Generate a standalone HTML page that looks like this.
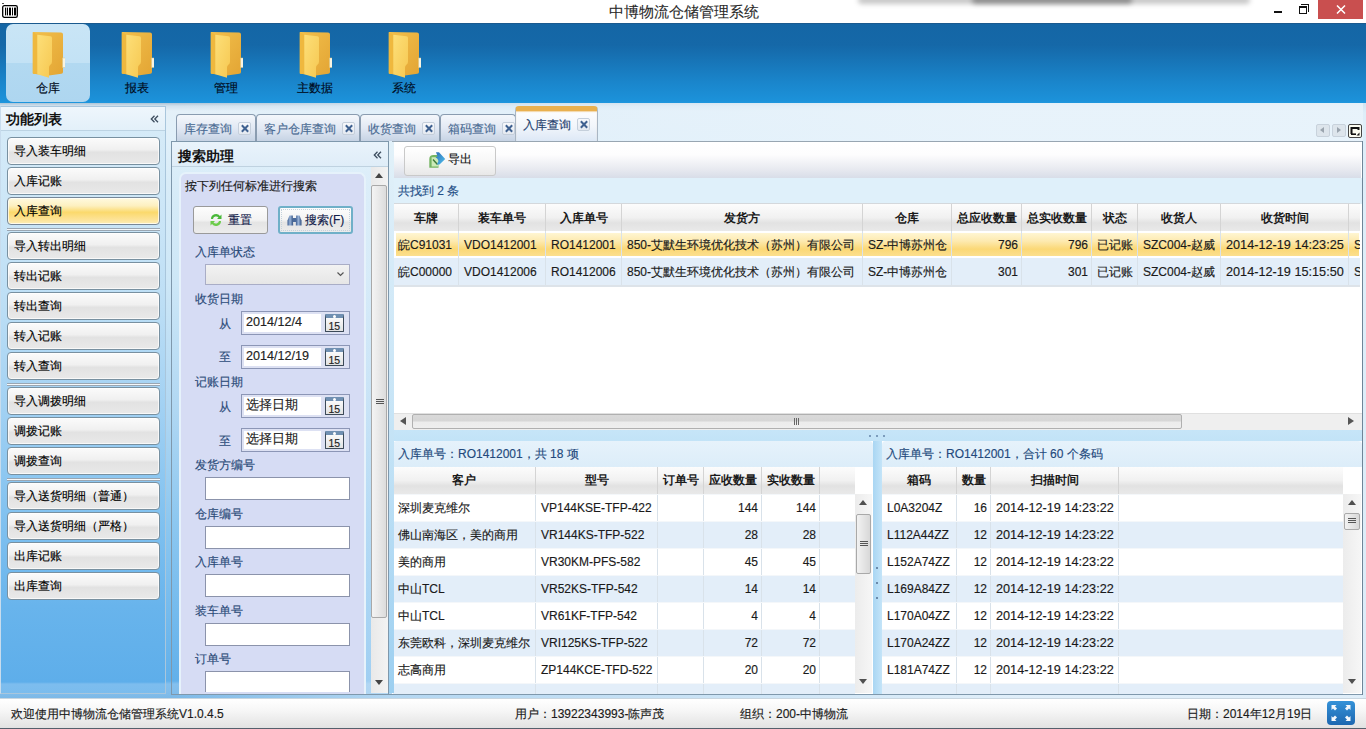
<!DOCTYPE html>
<html><head><meta charset="utf-8">
<style>
*{box-sizing:border-box;margin:0;padding:0}
html,body{width:1366px;height:729px;overflow:hidden;background:#fff;font-family:"Liberation Sans",sans-serif;font-size:12px;color:#1a1a1a;-webkit-text-stroke:0.15px currentColor}
.hc,.nb{-webkit-text-stroke:0}
.a{position:absolute}
.t{position:absolute;white-space:nowrap;line-height:1}
/* title */
#title{left:0;top:0;width:1366px;height:23px;background:#fff}
#ribbon{left:0;top:23px;width:1366px;height:80px;background:linear-gradient(#1a5a8f 0,#1a5a8f 1px,#1466a5 1px,#1568a8 22px,#1a86cc 60px,#1c92da 78px,#1e97de 80px)}
.rbsel{left:6px;top:24px;width:84px;height:78px;border-radius:7px;background:linear-gradient(#c9e5f6 0,#c3e2f5 50%,#b2d9f1 50%,#aed6f0 100%)}
.rlbl{font-size:12px;color:#000a20}
#below{left:0;top:103px;width:1366px;height:595px;background:linear-gradient(90deg,rgba(228,241,250,0) 0,rgba(228,241,250,0) 175px,rgba(224,239,250,.55) 390px,rgba(232,243,251,.92) 1000px),linear-gradient(#aec4d6 0,#d2e2ee 3px,#e4f0f8 8px,#e0f0fa 38px,#d8ecf8 80px,#cde7f7 180px,#b2d8f3 300px,#8cc7f0 420px,#6cb6ec 540px,#62b0ea 578px,#84c0ee 581px,#80bcea 591px,#7cb8e6 595px)}
/* left panel */
#lp{left:0;top:106px;width:166px;height:588px;border:1px solid #a9c6dc;border-left:1px solid #c8dced;background:linear-gradient(#d8ecf8 0,#cce6f7 100px,#bcdef5 200px,#a2d1f3 300px,#84c3f0 400px,#68b4ec 500px,#5eaeea 575px,#7dbdee 577px,#7abced 588px)}
#lph{left:0;top:0;width:164px;height:24px;border-bottom:1px solid #bcd3e3;background:linear-gradient(#eef6fc,#e3f0f9)}
.btn{position:absolute;left:6px;width:153px;height:28px;border:1px solid #7890a0;border-radius:4px;background:linear-gradient(#fbfbfb 0,#f0f0f0 45%,#e2e2e2 55%,#e9e9e9 100%);box-shadow:inset 0 0 0 1px rgba(255,255,255,.7)}
.btn span{position:absolute;left:6px;top:7px;font-size:12px;line-height:1;white-space:nowrap;color:#000}
.btn.sel{background:linear-gradient(#fffae0 0,#fdf0c0 30%,#fbd96c 55%,#fde49a 85%,#fdeeb8 100%);border-color:#788898}
.sep{position:absolute;left:6px;width:153px;height:3px;border-top:1px solid #9aa6b2;border-bottom:1px solid #9aa6b2;background:#f4f8fb}
/* tabs */
.tab{position:absolute;top:114px;height:27px;border:1px solid #8a9cb0;border-bottom:none;border-radius:4px 4px 0 0;background:linear-gradient(#f4f7fb 0,#e2e9f4 50%,#c6d3e4 100%)}
.tab span{position:absolute;top:8px;font-size:12px;line-height:1;color:#4a6b93;white-space:nowrap}
.tx{position:absolute;width:13px;height:13px;border:1px solid #c5cfdb;background:linear-gradient(#f6f8fb,#e4e9f0);border-radius:2px}
.tx:before,.tx:after{content:"";position:absolute;left:4.6px;top:1.3px;width:2px;height:9px;background:#3f6190;transform:rotate(45deg)}
.tx:after{transform:rotate(-45deg)}
/* search panel */
#sp{left:171px;top:141px;width:218px;height:554px;border:1px solid #7f98ac;background:transparent}
#sph{left:0;top:0;width:216px;height:25px;border-bottom:1px solid #bfd2e0;background:linear-gradient(#e9f3fb,#dfedf8)}
#card{left:7px;top:30px;width:187px;height:522px;border:2px solid #e6f2fb;border-bottom:none;border-radius:7px 7px 0 0;background:#d6dcf4}
.lbl{position:absolute;font-size:12px;line-height:1;color:#2a4a78;white-space:nowrap}
.tb{position:absolute;left:205px;width:145px;height:23px;border:1px solid #8b93ab;background:#fff}
.db{position:absolute;left:241px;width:109px;height:24px;border:1px solid #8c96b6;background:#dde1f3}
.db:before{content:"";position:absolute;left:2px;top:2px;width:77px;height:18px;background:#fff}
.db span{position:absolute;left:4px;top:4px;font-size:12.6px;line-height:1;white-space:nowrap;color:#222}
.cal{position:absolute;left:83px;top:2px;width:19px;height:18px;border:1px solid #3c4a58;border-radius:1px;border-top:4px solid #7090b2;background:linear-gradient(#fafafa,#e2e2e2)}
.cal:after{content:"";position:absolute;left:7px;top:-3.5px;width:3px;height:3px;border-radius:50%;background:#fff}
.cal:before{content:"15";position:absolute;left:2.5px;top:3px;font-size:10.5px;line-height:1;color:#222}
/* main */
#mp{left:392px;top:141px;width:971px;height:554px;border:1px solid #7f98ac;border-top-color:#98a6b2;border-left:none;background:#fff}
.hdr{position:absolute;height:28px;background:linear-gradient(#fcfcfc 0,#f1f1f1 50%,#e2e2e2 70%,#e9e9e9 100%)}
.hc{position:absolute;top:0;height:28px;border-right:1px solid #d4d4d4;font-weight:bold;font-size:12px;line-height:28px;text-align:center;white-space:nowrap;color:#1a1a1a}
.row{position:absolute;height:27px;overflow:hidden}
.c{position:absolute;top:0;height:27px;border-right:1px solid #d9e2ea;font-size:12px;line-height:29px;white-space:nowrap;overflow:hidden;padding:0 5px;color:#1a1a1a}
.r{text-align:right;padding-right:3px}
.rl .c{line-height:27px}
.ph{position:absolute;height:26px;background:linear-gradient(#e6f2fb,#dcedf9);border-radius:4px 4px 0 0}
.ph span{position:absolute;left:5px;top:7px;font-size:12px;line-height:1;color:#23497c;white-space:nowrap}
#status{left:0;top:698px;width:1366px;height:31px;background:linear-gradient(#ffffff 0,#f6f6f6 40%,#e2e2e2 96%,#8a949e 96%,#2e3a48 100%);border-top:1px solid #c9d6e0}
.st{position:absolute;top:9px;font-size:12px;line-height:1;white-space:nowrap;color:#1a1a1a}
.vs{position:absolute;background:#e9e9e9;border-left:1px solid #dadada}
.thumb{position:absolute;border:1px solid #a9a9a9;border-radius:2px;background:linear-gradient(90deg,#e8e8e8,#d6d6d6)}
.up{position:absolute;width:0;height:0;border-left:4.5px solid transparent;border-right:4.5px solid transparent;border-bottom:5.5px solid #505050}
.dn{position:absolute;width:0;height:0;border-left:4.5px solid transparent;border-right:4.5px solid transparent;border-top:5.5px solid #505050}
</style></head><body>

<!-- title bar -->
<div id="title" class="a">
  <svg class="a" style="left:2px;top:3px" width="17" height="15" viewBox="0 0 17 15"><rect x="0" y="0" width="2" height="1" fill="#555"/><rect x="0.7" y="2.7" width="14.6" height="11.6" rx="1.6" fill="none" stroke="#000" stroke-width="1.3"/><rect x="3" y="4.6" width="1.2" height="7.8" fill="#000"/><rect x="5" y="4.6" width="1" height="7.8" fill="#000"/><rect x="7" y="4.6" width="2" height="7.8" fill="#000"/><rect x="10" y="4.6" width="1" height="7.8" fill="#000"/><rect x="12" y="4.6" width="2" height="7.8" fill="#000"/></svg>
  <div class="t" style="left:609px;top:5px;font-size:14.5px;color:#2a2a2a;-webkit-text-stroke:0.1px #2a2a2a">中博物流仓储管理系统</div>
  <div class="a" style="left:858px;top:-4px;width:392px;height:8px;background:rgba(0,0,0,.22);border-radius:8px;filter:blur(2.5px)"></div>
  <div class="a" style="left:972px;top:-4px;width:160px;height:8px;background:rgba(0,0,0,.3);border-radius:8px;filter:blur(2.5px)"></div>
  <div class="a" style="left:1274px;top:11px;width:8px;height:2px;background:#111"></div>
  <div class="a" style="left:1299px;top:6px;width:8px;height:8px;border:1px solid #111;border-top-width:2px"></div>
  <div class="a" style="left:1301px;top:4px;width:8px;height:8px;border-top:1px solid #111;border-right:1px solid #111"></div>
  <div class="a" style="left:1318px;top:0;width:45px;height:19px;background:#c94f4f"></div>
  <svg class="a" style="left:1336px;top:5px" width="10" height="9" viewBox="0 0 10 9"><path d="M1 0.5L9 8.5M9 0.5L1 8.5" stroke="#fff" stroke-width="1.5"/></svg>
</div>

<!-- ribbon -->
<div id="ribbon" class="a"></div>
<div class="a rbsel"></div>
<svg width="0" height="0" style="position:absolute">
  <defs>
    <linearGradient id="fb" x1="0" y1="0" x2="1" y2="1"><stop offset="0" stop-color="#f2c04c"/><stop offset="1" stop-color="#e3a534"/></linearGradient>
    <linearGradient id="ff" x1="0" y1="0" x2="1" y2="1"><stop offset="0" stop-color="#fddf78"/><stop offset="1" stop-color="#f6c852"/></linearGradient>
    <symbol id="folder" viewBox="0 0 34 48">
      <path d="M2 1 L30 1.6 Q32 1.7 32 3.6 L32 41 Q32 42.6 30.4 42.8 L18 44.6 L2.4 42.8 Q1.8 42.7 1.8 42 L1.8 1.6 Z" fill="url(#fb)"/>
      <path d="M1.8 1.2 L6.5 3.8 L6.5 43.2 L1.8 42.6 Z" fill="#efb83e"/>
      <rect x="31.6" y="27" width="2.8" height="9.5" fill="#f8f4e2" stroke="#dcc888" stroke-width="0.5"/>
      <path d="M6.3 3.8 L19.5 5.2 Q21 5.4 21 7 L21 30.5 Q21 32.8 19.4 33.8 Q18 34.8 18 36.8 L18 46.8 L6.3 43.2 Z" fill="url(#ff)"/>
    </symbol>
  </defs>
</svg>
<svg class="a" style="left:31px;top:31px" width="34" height="48"><use href="#folder"/></svg>
<svg class="a" style="left:120px;top:31px" width="34" height="48"><use href="#folder"/></svg>
<svg class="a" style="left:209px;top:31px" width="34" height="48"><use href="#folder"/></svg>
<svg class="a" style="left:298px;top:31px" width="34" height="48"><use href="#folder"/></svg>
<svg class="a" style="left:387px;top:31px" width="34" height="48"><use href="#folder"/></svg>
<div class="t rlbl" style="left:36px;top:82px">仓库</div>
<div class="t rlbl" style="left:125px;top:82px">报表</div>
<div class="t rlbl" style="left:214px;top:82px">管理</div>
<div class="t rlbl" style="left:297px;top:82px">主数据</div>
<div class="t rlbl" style="left:392px;top:82px">系统</div>

<div id="below" class="a"></div>

<!-- left panel -->
<div id="lp" class="a">
  <div id="lph" class="a"></div>
  <div class="t" style="left:5px;top:6px;font-size:13.5px;font-weight:bold;color:#111;-webkit-text-stroke:0">功能列表</div>
  <svg class="a" style="left:149px;top:8px" width="9" height="8" viewBox="0 0 9 8"><path d="M4.5 0.8 L1.3 4 L4.5 7.2 M8 0.8 L4.8 4 L8 7.2" stroke="#3c4c5e" stroke-width="1.3" fill="none"/></svg>
  <div class="btn" style="top:30px"><span>导入装车明细</span></div>
  <div class="btn" style="top:60px"><span>入库记账</span></div>
  <div class="btn sel" style="top:90px"><span>入库查询</span></div>
  <div class="sep" style="top:121px"></div>
  <div class="btn" style="top:125px"><span>导入转出明细</span></div>
  <div class="btn" style="top:155px"><span>转出记账</span></div>
  <div class="btn" style="top:185px"><span>转出查询</span></div>
  <div class="btn" style="top:215px"><span>转入记账</span></div>
  <div class="btn" style="top:245px"><span>转入查询</span></div>
  <div class="sep" style="top:276px"></div>
  <div class="btn" style="top:280px"><span>导入调拨明细</span></div>
  <div class="btn" style="top:310px"><span>调拨记账</span></div>
  <div class="btn" style="top:340px"><span>调拨查询</span></div>
  <div class="sep" style="top:371px"></div>
  <div class="btn" style="top:375px"><span>导入送货明细（普通）</span></div>
  <div class="btn" style="top:405px"><span>导入送货明细（严格）</span></div>
  <div class="btn" style="top:435px"><span>出库记账</span></div>
  <div class="btn" style="top:465px"><span>出库查询</span></div>
</div>

<!-- tabs -->
<div class="tab" style="left:176px;width:80px"><span style="left:7px">库存查询</span><div class="tx" style="left:61px;top:7px"></div></div>
<div class="tab" style="left:256px;width:104px"><span style="left:7px">客户仓库查询</span><div class="tx" style="left:85px;top:7px"></div></div>
<div class="tab" style="left:360px;width:80px"><span style="left:7px">收货查询</span><div class="tx" style="left:61px;top:7px"></div></div>
<div class="tab" style="left:440px;width:76px"><span style="left:7px">箱码查询</span><div class="tx" style="left:61px;top:7px"></div></div>
<div class="tab" style="left:515px;top:106px;height:35px;width:83px;border-color:#a9b6c4;border-top:5px solid #e9b04f;box-shadow:inset 0 1px 1px rgba(233,176,79,.5);background:linear-gradient(#fdfdfe 0,#f2f6fb 50%,#dde8f6 100%)"><span style="left:7px;top:8px;color:#1e3e6e">入库查询</span><div class="tx" style="left:61px;top:7px"></div></div>

<!-- tab scroll buttons -->
<div class="a" style="left:1316px;top:124px;width:14px;height:13px;border:1px solid #c8d2dc;background:#dde5ec;border-radius:2px"></div>
<div class="a" style="left:1320px;top:127px;width:0;height:0;border-top:3.5px solid transparent;border-bottom:3.5px solid transparent;border-right:4px solid #9aa4ae"></div>
<div class="a" style="left:1332px;top:124px;width:14px;height:13px;border:1px solid #c8d2dc;background:#dde5ec;border-radius:2px"></div>
<div class="a" style="left:1337px;top:127px;width:0;height:0;border-top:3.5px solid transparent;border-bottom:3.5px solid transparent;border-left:4px solid #9aa4ae"></div>
<div class="a" style="left:1348px;top:124px;width:14px;height:14px;border:1px solid #444;background:#fbfbf0;border-radius:2px"></div>
<svg class="a" style="left:1349px;top:125px" width="12" height="12" viewBox="0 0 12 12"><path d="M2.5 9 L2.5 3 L9.5 3 L9.5 5" stroke="#111" stroke-width="2" fill="none"/><path d="M2 9.2 L7 9.2" stroke="#111" stroke-width="1.6"/><path d="M10.5 7.5 L10.5 10.5 L7.5 10.5 Z" fill="#111"/></svg>

<!-- search panel -->
<div id="sp" class="a">
  <div id="sph" class="a"></div>
  <div class="t" style="left:6px;top:8px;font-size:13.5px;font-weight:bold;color:#111;-webkit-text-stroke:0">搜索助理</div>
  <svg class="a" style="left:201px;top:9px" width="9" height="8" viewBox="0 0 9 8"><path d="M4.5 0.8 L1.3 4 L4.5 7.2 M8 0.8 L4.8 4 L8 7.2" stroke="#3c4c5e" stroke-width="1.3" fill="none"/></svg>
  <div id="card" class="a"></div>
  <!-- scrollbar -->
  <div class="a" style="left:199px;top:25px;width:17px;height:526px;background:linear-gradient(90deg,#e9e9e9,#f3f3f3)"></div>
  <div class="up" style="left:203px;top:31px;border-left-width:4.5px;border-right-width:4.5px;border-bottom-width:5.5px;border-bottom-color:#444"></div>
  <div class="thumb" style="left:199px;top:43px;width:16px;height:433px;background:linear-gradient(90deg,#f4f4f4,#dcdcdc)"></div>
  <div class="a" style="left:204px;top:257px;width:8px;height:1px;background:#555;box-shadow:0 2px 0 #555,0 4px 0 #555"></div>
  <div class="dn" style="left:203px;top:538px;border-left-width:4.5px;border-right-width:4.5px;border-top-width:5.5px;border-top-color:#444"></div>
</div>
<div class="t" style="left:185px;top:180px;font-size:12px;color:#1a1a1a">按下列任何标准进行搜索</div>
<div class="a" style="left:193px;top:206px;width:75px;height:28px;border:1px solid #9a9a9a;border-radius:3px;background:linear-gradient(#fdfdfd 0,#f3f3f3 50%,#e4e4e4 60%,#ececec 100%)"></div>
<svg class="a" style="left:209px;top:212px" width="14" height="16" viewBox="0 0 14 16"><path d="M2 7 A5 5 0 0 1 11 4 L12.5 2.5 L12.5 7 L8 7 L9.5 5.5 A3.2 3.2 0 0 0 4 7 Z" fill="#4ab83a"/><path d="M12 9 A5 5 0 0 1 3 12 L1.5 13.5 L1.5 9 L6 9 L4.5 10.5 A3.2 3.2 0 0 0 10 9 Z" fill="#6ccc4a"/></svg>
<div class="t" style="left:228px;top:214px;font-size:12px;color:#13214a">重置</div>
<div class="a" style="left:278px;top:206px;width:75px;height:28px;border:2px solid #6fb0c8;border-radius:3px;background:linear-gradient(#fdfdfd 0,#f3f3f3 50%,#e4e4e4 60%,#ececec 100%)"></div>
<div class="a" style="left:281px;top:209px;width:69px;height:22px;border:1px dotted #c4d2dc"></div>
<svg class="a" style="left:287px;top:214px" width="15" height="12" viewBox="0 0 15 12"><defs><linearGradient id="bn" x1="0" y1="0" x2="1" y2="0"><stop offset="0" stop-color="#3a5c90"/><stop offset=".45" stop-color="#9ab4d8"/><stop offset="1" stop-color="#2f4f80"/></linearGradient></defs><path d="M0.5 11.5 L0.5 6.5 L2.5 1.5 L5.8 1.5 L6.2 11.5 Z" fill="url(#bn)"/><path d="M8.8 11.5 L9.2 1.5 L12.5 1.5 L14.5 6.5 L14.5 11.5 Z" fill="url(#bn)"/><rect x="5.8" y="4" width="3.4" height="4" fill="#4a6a9a"/></svg>
<div class="t" style="left:305px;top:214px;font-size:12px;color:#13214a">搜索(F)</div>

<div class="lbl" style="left:195px;top:246px">入库单状态</div>
<div class="a" style="left:205px;top:264px;width:145px;height:21px;border:1px solid #a9adc6;background:linear-gradient(#f2f2f2,#e6e6e6)"></div>
<svg class="a" style="left:337px;top:272px" width="7" height="5" viewBox="0 0 7 5"><path d="M0.5 0.5L3.5 3.5L6.5 0.5" stroke="#555" fill="none" stroke-width="1.2"/></svg>
<div class="lbl" style="left:195px;top:293px">收货日期</div>
<div class="lbl" style="left:219px;top:318px">从</div>
<div class="db" style="top:311px"><span>2014/12/4</span><div class="cal"></div></div>
<div class="lbl" style="left:219px;top:351px">至</div>
<div class="db" style="top:345px"><span>2014/12/19</span><div class="cal"></div></div>
<div class="lbl" style="left:195px;top:376px">记账日期</div>
<div class="lbl" style="left:219px;top:401px">从</div>
<div class="db" style="top:394px"><span>选择日期</span><div class="cal"></div></div>
<div class="lbl" style="left:219px;top:435px">至</div>
<div class="db" style="top:428px"><span>选择日期</span><div class="cal"></div></div>
<div class="lbl" style="left:195px;top:459px">发货方编号</div>
<div class="tb" style="top:477px"></div>
<div class="lbl" style="left:195px;top:508px">仓库编号</div>
<div class="tb" style="top:526px"></div>
<div class="lbl" style="left:195px;top:556px">入库单号</div>
<div class="tb" style="top:574px"></div>
<div class="lbl" style="left:195px;top:605px">装车单号</div>
<div class="tb" style="top:623px"></div>
<div class="lbl" style="left:195px;top:653px">订单号</div>
<div class="tb" style="top:671px;height:21px;border-bottom:none"></div>

<!-- main -->
<div id="mp" class="a"></div>
<!-- toolbar -->
<div class="a" style="left:393px;top:142px;width:968px;height:36px;background:linear-gradient(#ffffff 0,#fdfdfe 35%,#e8eaf0 75%,#d8dde8 100%)"></div>
<div class="a" style="left:404px;top:146px;width:92px;height:30px;border:1px solid #c9c9c9;border-radius:3px;background:linear-gradient(#ffffff 0,#f7f7f7 50%,#e8e8e8 100%)"></div>
<svg class="a" style="left:429px;top:152px" width="17" height="16" viewBox="0 0 17 16"><defs><linearGradient id="ar" x1="0" y1="0" x2="1" y2="1"><stop offset="0" stop-color="#2f6fb8"/><stop offset="1" stop-color="#4fc0ec"/></linearGradient></defs><path d="M0.3 15.8 L0.3 7 Q0.3 3 4.5 3 L9.5 3 L9.5 15.8 Z" fill="#74b462"/><path d="M2.6 5.2 L9.5 5.2 L9.5 14.5 L2.6 14.5 Z" fill="#cdebb8"/><path d="M4 7.5 L8.5 12.5" stroke="#3f7c3c" stroke-width="1.4"/><path d="M7 0.3 L10 0.3 L16.2 7 L10.5 12.5 L7.8 12.5 L9.5 9 Q8.8 6.5 6.5 5.2 L8.6 4.5 Z" fill="url(#ar)"/></svg>
<div class="t" style="left:448px;top:153px;font-size:12px;color:#111">导出</div>
<!-- found band -->
<div class="a" style="left:393px;top:178px;width:969px;height:26px;background:#dff0fa"></div>
<div class="t" style="left:398px;top:185px;font-size:12px;color:#1f4f86">共找到 2 条</div>
<!-- grid header -->
<div class="hdr" style="left:393px;top:203px;width:967px;height:28px;border-top:1px solid #d4d8dc">
  <div class="hc" style="left:0;width:66px">车牌</div>
  <div class="hc" style="left:66px;width:87px">装车单号</div>
  <div class="hc" style="left:153px;width:76px">入库单号</div>
  <div class="hc" style="left:229px;width:241px">发货方</div>
  <div class="hc" style="left:470px;width:89px">仓库</div>
  <div class="hc" style="left:559px;width:70px">总应收数量</div>
  <div class="hc" style="left:629px;width:70px">总实收数量</div>
  <div class="hc" style="left:699px;width:46px">状态</div>
  <div class="hc" style="left:745px;width:83px">收货人</div>
  <div class="hc" style="left:828px;width:128px">收货时间</div>
  <div class="hc" style="left:956px;width:13px;border-right:none"></div>
</div>
<div class="row" style="left:393px;top:231px;width:967px;background:#fff">
  <div class="a" style="left:3px;top:2px;right:1px;bottom:2px;background:linear-gradient(#fff6d2 0,#fdeab0 35%,#fbd876 70%,#fcdf8e 100%)"></div>
  <div class="c" style="left:0;width:66px">皖C91031</div>
  <div class="c" style="left:66px;width:87px">VDO1412001</div>
  <div class="c" style="left:153px;width:76px">RO1412001</div>
  <div class="c" style="left:229px;width:241px">850-艾默生环境优化技术（苏州）有限公司</div>
  <div class="c" style="left:470px;width:89px">SZ-中博苏州仓</div>
  <div class="c r" style="left:559px;width:70px">796</div>
  <div class="c r" style="left:629px;width:70px">796</div>
  <div class="c" style="left:699px;width:46px">已记账</div>
  <div class="c" style="left:745px;width:83px">SZC004-赵威</div>
  <div class="c" style="left:828px;width:128px;font-size:12.7px">2014-12-19 14:23:25</div>
  <div class="c" style="left:956px;width:11px;border-right:none">S</div>
</div>
<div class="row" style="left:393px;top:258px;width:967px;height:29px;background:#e3eef9;border-bottom:2px solid #dde3e9">
  <div class="c" style="left:0;width:66px">皖C00000</div>
  <div class="c" style="left:66px;width:87px">VDO1412006</div>
  <div class="c" style="left:153px;width:76px">RO1412006</div>
  <div class="c" style="left:229px;width:241px">850-艾默生环境优化技术（苏州）有限公司</div>
  <div class="c" style="left:470px;width:89px">SZ-中博苏州仓</div>
  <div class="c r" style="left:559px;width:70px">301</div>
  <div class="c r" style="left:629px;width:70px">301</div>
  <div class="c" style="left:699px;width:46px">已记账</div>
  <div class="c" style="left:745px;width:83px">SZC004-赵威</div>
  <div class="c" style="left:828px;width:128px;font-size:12.7px">2014-12-19 15:15:50</div>
  <div class="c" style="left:956px;width:11px;border-right:none">S</div>
</div>
<!-- hscroll -->
<div class="a" style="left:393px;top:413px;width:969px;height:17px;background:#efefef;border-top:1px solid #e0e0e0"></div>
<div class="a" style="left:400px;top:417px;width:0;height:0;border-top:4.5px solid transparent;border-bottom:4.5px solid transparent;border-right:6px solid #555"></div>
<div class="a" style="left:412px;top:414px;width:770px;height:15px;border:1px solid #b0b0b0;border-radius:2px;background:linear-gradient(#d9d9d9 0,#d6d6d6 45%,#ececec 55%,#eeeeee 100%)"></div>
<div class="a" style="left:794px;top:418px;width:1px;height:7px;background:#666;box-shadow:2px 0 0 #666,4px 0 0 #666"></div>
<div class="a" style="left:1348px;top:417px;width:0;height:0;border-top:4.5px solid transparent;border-bottom:4.5px solid transparent;border-left:6px solid #555"></div>
<!-- splitter band -->
<div class="a" style="left:393px;top:430px;width:969px;height:11px;background:linear-gradient(#c6e5f8,#c2e3f7)"></div>
<div class="a" style="left:869px;top:435px;width:2px;height:2px;background:#7c9cbc;box-shadow:7px 0 0 #7c9cbc,14px 0 0 #7c9cbc"></div>
<div class="a" style="left:873px;top:441px;width:9px;height:253px;background:linear-gradient(90deg,#a9d6f3,#c4e4f8)"></div>
<div class="a" style="left:876px;top:567px;width:2px;height:2px;background:#6a8aaa;box-shadow:0 15px 0 #6a8aaa,0 30px 0 #6a8aaa"></div>

<!-- lower left -->
<div class="a" style="left:393px;top:441px;width:480px;height:253px;background:#fff"></div>
<div class="ph" style="left:393px;top:441px;width:480px"><span>入库单号：RO1412001，共 18 项</span></div>
<div class="hdr" style="left:393px;top:467px;width:462px;height:27px"><div class="hc" style="left:0px;width:143px;height:27px;line-height:27px">客户</div><div class="hc" style="left:143px;width:122px;height:27px;line-height:27px">型号</div><div class="hc" style="left:265px;width:46px;height:27px;line-height:27px">订单号</div><div class="hc" style="left:311px;width:58px;height:27px;line-height:27px">应收数量</div><div class="hc" style="left:369px;width:58px;height:27px;line-height:27px">实收数量</div><div class="hc" style="left:427px;width:35px;height:27px;line-height:27px;border-right:none"></div></div>
<div class="row rl" style="left:393px;top:494px;width:462px;height:27px;background:#ffffff;border-top:1px solid #f4f7fa"><div class="c" style="left:0px;width:143px">深圳麦克维尔</div><div class="c" style="left:143px;width:122px">VP144KSE-TFP-422</div><div class="c" style="left:265px;width:46px"></div><div class="c r" style="left:311px;width:58px">144</div><div class="c r" style="left:369px;width:58px">144</div><div class="c" style="left:427px;width:35px;border-right:none"></div></div>
<div class="row rl" style="left:393px;top:521px;width:462px;height:27px;background:#e3eef9;border-top:1px solid #f4f7fa"><div class="c" style="left:0px;width:143px">佛山南海区，美的商用</div><div class="c" style="left:143px;width:122px">VR144KS-TFP-522</div><div class="c" style="left:265px;width:46px"></div><div class="c r" style="left:311px;width:58px">28</div><div class="c r" style="left:369px;width:58px">28</div><div class="c" style="left:427px;width:35px;border-right:none"></div></div>
<div class="row rl" style="left:393px;top:548px;width:462px;height:27px;background:#ffffff;border-top:1px solid #f4f7fa"><div class="c" style="left:0px;width:143px">美的商用</div><div class="c" style="left:143px;width:122px">VR30KM-PFS-582</div><div class="c" style="left:265px;width:46px"></div><div class="c r" style="left:311px;width:58px">45</div><div class="c r" style="left:369px;width:58px">45</div><div class="c" style="left:427px;width:35px;border-right:none"></div></div>
<div class="row rl" style="left:393px;top:575px;width:462px;height:27px;background:#e3eef9;border-top:1px solid #f4f7fa"><div class="c" style="left:0px;width:143px">中山TCL</div><div class="c" style="left:143px;width:122px">VR52KS-TFP-542</div><div class="c" style="left:265px;width:46px"></div><div class="c r" style="left:311px;width:58px">14</div><div class="c r" style="left:369px;width:58px">14</div><div class="c" style="left:427px;width:35px;border-right:none"></div></div>
<div class="row rl" style="left:393px;top:602px;width:462px;height:27px;background:#ffffff;border-top:1px solid #f4f7fa"><div class="c" style="left:0px;width:143px">中山TCL</div><div class="c" style="left:143px;width:122px">VR61KF-TFP-542</div><div class="c" style="left:265px;width:46px"></div><div class="c r" style="left:311px;width:58px">4</div><div class="c r" style="left:369px;width:58px">4</div><div class="c" style="left:427px;width:35px;border-right:none"></div></div>
<div class="row rl" style="left:393px;top:629px;width:462px;height:27px;background:#e3eef9;border-top:1px solid #f4f7fa"><div class="c" style="left:0px;width:143px">东莞欧科，深圳麦克维尔</div><div class="c" style="left:143px;width:122px">VRI125KS-TFP-522</div><div class="c" style="left:265px;width:46px"></div><div class="c r" style="left:311px;width:58px">72</div><div class="c r" style="left:369px;width:58px">72</div><div class="c" style="left:427px;width:35px;border-right:none"></div></div>
<div class="row rl" style="left:393px;top:656px;width:462px;height:27px;background:#ffffff;border-top:1px solid #f4f7fa"><div class="c" style="left:0px;width:143px">志高商用</div><div class="c" style="left:143px;width:122px">ZP144KCE-TFD-522</div><div class="c" style="left:265px;width:46px"></div><div class="c r" style="left:311px;width:58px">20</div><div class="c r" style="left:369px;width:58px">20</div><div class="c" style="left:427px;width:35px;border-right:none"></div></div>
<div class="row rl" style="left:393px;top:683px;width:462px;height:11px;background:#e3eef9;border-top:1px solid #f4f7fa"><div class="c" style="left:0px;width:143px"></div><div class="c" style="left:143px;width:122px"></div><div class="c" style="left:265px;width:46px"></div><div class="c r" style="left:311px;width:58px"></div><div class="c r" style="left:369px;width:58px"></div><div class="c" style="left:427px;width:35px;border-right:none"></div></div>
<div class="a" style="left:882px;top:441px;width:480px;height:253px;background:#fff"></div>
<div class="ph" style="left:882px;top:441px;width:480px"><span style="left:4px">入库单号：RO1412001，合计 60 个条码</span></div>
<div class="hdr" style="left:882px;top:467px;width:461px;height:27px"><div class="hc" style="left:0px;width:75px;height:27px;line-height:27px">箱码</div><div class="hc" style="left:75px;width:34px;height:27px;line-height:27px">数量</div><div class="hc" style="left:109px;width:128px;height:27px;line-height:27px">扫描时间</div><div class="hc" style="left:237px;width:224px;height:27px;line-height:27px;border-right:none"></div></div>
<div class="row rl" style="left:882px;top:494px;width:461px;height:27px;background:#ffffff;border-top:1px solid #f4f7fa"><div class="c" style="left:0px;width:75px">L0A3204Z</div><div class="c r" style="left:75px;width:34px">16</div><div class="c" style="left:109px;width:128px;font-size:12.7px">2014-12-19 14:23:22</div><div class="c" style="left:237px;width:224px;border-right:none"></div></div>
<div class="row rl" style="left:882px;top:521px;width:461px;height:27px;background:#e3eef9;border-top:1px solid #f4f7fa"><div class="c" style="left:0px;width:75px">L112A44ZZ</div><div class="c r" style="left:75px;width:34px">12</div><div class="c" style="left:109px;width:128px;font-size:12.7px">2014-12-19 14:23:22</div><div class="c" style="left:237px;width:224px;border-right:none"></div></div>
<div class="row rl" style="left:882px;top:548px;width:461px;height:27px;background:#ffffff;border-top:1px solid #f4f7fa"><div class="c" style="left:0px;width:75px">L152A74ZZ</div><div class="c r" style="left:75px;width:34px">12</div><div class="c" style="left:109px;width:128px;font-size:12.7px">2014-12-19 14:23:22</div><div class="c" style="left:237px;width:224px;border-right:none"></div></div>
<div class="row rl" style="left:882px;top:575px;width:461px;height:27px;background:#e3eef9;border-top:1px solid #f4f7fa"><div class="c" style="left:0px;width:75px">L169A84ZZ</div><div class="c r" style="left:75px;width:34px">12</div><div class="c" style="left:109px;width:128px;font-size:12.7px">2014-12-19 14:23:22</div><div class="c" style="left:237px;width:224px;border-right:none"></div></div>
<div class="row rl" style="left:882px;top:602px;width:461px;height:27px;background:#ffffff;border-top:1px solid #f4f7fa"><div class="c" style="left:0px;width:75px">L170A04ZZ</div><div class="c r" style="left:75px;width:34px">12</div><div class="c" style="left:109px;width:128px;font-size:12.7px">2014-12-19 14:23:22</div><div class="c" style="left:237px;width:224px;border-right:none"></div></div>
<div class="row rl" style="left:882px;top:629px;width:461px;height:27px;background:#e3eef9;border-top:1px solid #f4f7fa"><div class="c" style="left:0px;width:75px">L170A24ZZ</div><div class="c r" style="left:75px;width:34px">12</div><div class="c" style="left:109px;width:128px;font-size:12.7px">2014-12-19 14:23:22</div><div class="c" style="left:237px;width:224px;border-right:none"></div></div>
<div class="row rl" style="left:882px;top:656px;width:461px;height:27px;background:#ffffff;border-top:1px solid #f4f7fa"><div class="c" style="left:0px;width:75px">L181A74ZZ</div><div class="c r" style="left:75px;width:34px">12</div><div class="c" style="left:109px;width:128px;font-size:12.7px">2014-12-19 14:23:22</div><div class="c" style="left:237px;width:224px;border-right:none"></div></div>
<div class="row rl" style="left:882px;top:683px;width:461px;height:11px;background:#e3eef9;border-top:1px solid #f4f7fa"><div class="c" style="left:0px;width:75px"></div><div class="c r" style="left:75px;width:34px"></div><div class="c" style="left:109px;width:128px"></div><div class="c" style="left:237px;width:224px;border-right:none"></div></div>
<div class="a" style="left:855px;top:494px;width:17px;height:199px;background:linear-gradient(90deg,#ececec,#f6f6f6)"></div>
<div class="up" style="left:859px;top:500px"></div>
<div class="thumb" style="left:856px;top:514px;width:15px;height:60px;background:linear-gradient(90deg,#f2f2f2,#d8d8d8)"></div>
<div class="a" style="left:860px;top:541px;width:8px;height:1px;background:#555;box-shadow:0 2px 0 #555,0 4px 0 #555"></div>
<div class="dn" style="left:859px;top:679px"></div>
<div class="a" style="left:1343px;top:494px;width:18px;height:199px;background:linear-gradient(90deg,#ececec,#f6f6f6)"></div>
<div class="up" style="left:1348px;top:500px"></div>
<div class="thumb" style="left:1344px;top:513px;width:16px;height:17px;background:linear-gradient(90deg,#f2f2f2,#d8d8d8)"></div>
<div class="a" style="left:1348px;top:518px;width:8px;height:1px;background:#555;box-shadow:0 2px 0 #555,0 4px 0 #555"></div>
<div class="dn" style="left:1348px;top:679px"></div>
<div class="a" style="left:388px;top:694px;width:975px;height:1px;background:#7f98ac"></div>
<div class="a" style="left:389px;top:142px;width:5px;height:551px;background:linear-gradient(#e2f1f9 0,#d6ebf8 120px,#c4e3f6 300px,#acd7f3 450px,#9ccff0 551px)"></div>
<div class="a" style="left:1362px;top:141px;width:1px;height:554px;background:#6f8598"></div>
<div class="a" style="left:1363px;top:103px;width:3px;height:595px;background:linear-gradient(#d0e4f2,#deeef9 10px,#dcecf8)"></div>
<!-- status -->
<div id="status" class="a">
  <div class="st" style="left:11px">欢迎使用中博物流仓储管理系统V1.0.4.5</div>
  <div class="st" style="left:515px">用户：13922343993-陈声茂</div>
  <div class="st" style="left:740px">组织：200-中博物流</div>
  <div class="st" style="left:1187px">日期：2014年12月19日</div>
  <div class="a" style="left:1327px;top:2px;width:28px;height:24px;border-radius:4px;background:linear-gradient(#3592d8,#1d67b0)"></div>
  <svg class="a" style="left:1327px;top:2px" width="28" height="24" viewBox="0 0 28 24"><g fill="#f4f8fc"><path d="M4.5 4 L9.5 4 L8 5.5 L10 7.5 L8 9.5 L6 7.5 L4.5 9 Z"/><path d="M23.5 4 L18.5 4 L20 5.5 L18 7.5 L20 9.5 L22 7.5 L23.5 9 Z"/><path d="M4.5 20 L9.5 20 L8 18.5 L10 16.5 L8 14.5 L6 16.5 L4.5 15 Z"/><path d="M23.5 20 L18.5 20 L20 18.5 L18 16.5 L20 14.5 L22 16.5 L23.5 15 Z"/></g></svg>
</div>
</body></html>
